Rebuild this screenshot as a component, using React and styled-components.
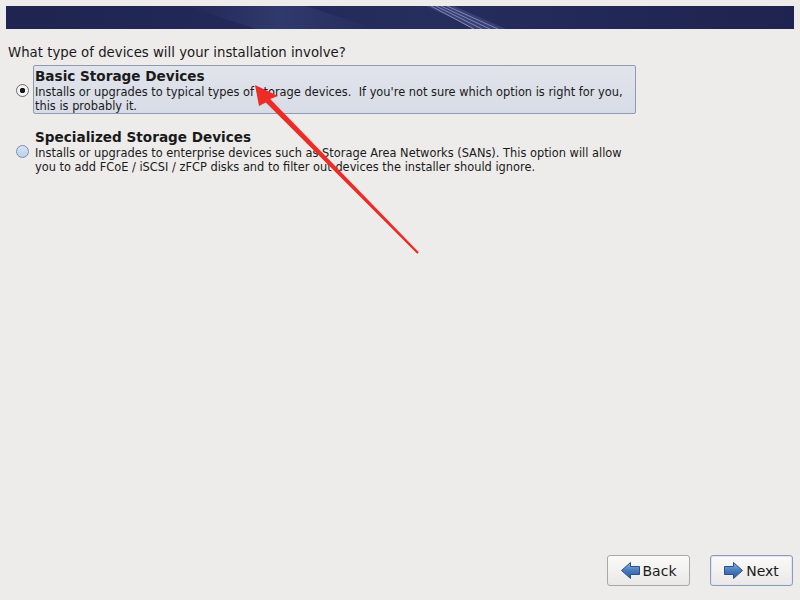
import React from "react";
import styled, { createGlobalStyle } from "styled-components";

const Global = createGlobalStyle`
  html, body { margin: 0; padding: 0; }
  body {
    background: #edeceb;
    font-family: "DejaVu Sans", "Liberation Sans", sans-serif;
    color: #1a1a1a;
  }
`;

const Page = styled.div`
  position: relative;
  height: 600px;
  width: 800px;
  display: flex;
  flex-direction: column;
  box-sizing: border-box;
  padding: 6px 7px 14px 6px;
  overflow: hidden;
`;

const Banner = styled.div`
  position: relative;
  height: 23px;
  margin-right: -1px;
  background: linear-gradient(90deg, #1f2450 0%, #232a5a 35%, #262e5e 55%, #222857 75%, #1f234f 100%);
  overflow: hidden;
`;

const Streak = styled.svg`
  position: absolute;
  left: 0;
  top: 0;
`;

const Question = styled.div`
  margin: 16px 0 0 2px;
  font-size: 13.3px;
  line-height: 16px;
`;

const Options = styled.div`
  display: flex;
  flex-direction: column;
  gap: 12px;
  margin-top: 4px;
`;

const OptionRow = styled.label`
  display: flex;
  align-items: center;
`;

const RadioCol = styled.div`
  width: 27px;
  display: flex;
  justify-content: flex-end;
  padding-right: 4px;
  box-sizing: border-box;
`;

const Radio = styled.span`
  width: 11px;
  height: 11px;
  border-radius: 50%;
  border: 1px solid ${(p) => (p.checked ? "#6b6b6b" : "#7f8ea8")};
  background: ${(p) =>
    p.checked
      ? "radial-gradient(circle, #1a1a1a 0 2.5px, #f4f4f4 3px)"
      : "linear-gradient(#d6e4f7, #bcd0ee)"};
  display: block;
  margin-top: 1px;
`;

const OptionBox = styled.div`
  width: 603px;
  box-sizing: border-box;
  padding: 1px 1px 0 1px;
  border: 1px solid ${(p) => (p.selected ? "#8f9ab3" : "transparent")};
  border-radius: 2px;
  background: ${(p) => (p.selected ? "linear-gradient(#e1e4eb, #d8dce6)" : "transparent")};
`;

const OptionTitle = styled.div`
  font-weight: bold;
  font-size: 13.6px;
  line-height: 18px;
`;

const OptionDesc = styled.div`
  font-size: 11.4px;
  line-height: 14px;
`;

const Spacer = styled.div`
  flex: 1;
`;

const Footer = styled.div`
  display: flex;
  justify-content: flex-end;
  gap: 20px;
`;

const Button = styled.button`
  width: 83px;
  height: 31px;
  display: flex;
  align-items: center;
  justify-content: center;
  gap: 2px;
  padding: 0 1px 0 0;
  border: 1px solid ${(p) => (p.focused ? "#8d9cb6" : "#a8a8a6")};
  border-radius: 3px;
  background: linear-gradient(#fafaf9, #e9e8e6);
  font-family: "DejaVu Sans", sans-serif;
  font-size: 14px;
  color: #1a1a1a;
  box-shadow: ${(p) => (p.focused ? "inset 0 0 0 1px #dfe6f0" : "none")};
`;

const Annotation = styled.svg`
  position: absolute;
  left: 0;
  top: 0;
  pointer-events: none;
`;

function BlueArrow({ dir }) {
  const flip = dir === "left" ? "translate(21,0) scale(-1,1)" : undefined;
  return (
    <svg width="21" height="19" viewBox="0 0 21 19">
      <defs>
        <linearGradient id={`g-${dir}`} x1="0" y1="0" x2="0" y2="1">
          <stop offset="0" stopColor="#8fb3de" />
          <stop offset="0.5" stopColor="#4a7bbd" />
          <stop offset="1" stopColor="#2c5a9a" />
        </linearGradient>
      </defs>
      <g transform={flip}>
        <path
          d="M1.5 5.5 H10.5 V1.5 L19.5 9.5 L10.5 17.5 V13.5 H1.5 Z"
          fill={`url(#g-${dir})`}
          stroke="#27508c"
          strokeWidth="1"
          strokeLinejoin="round"
        />
      </g>
    </svg>
  );
}

export default function App() {
  return (
    <>
      <Global />
      <Page>
        <Banner>
          <Streak width="789" height="23" viewBox="0 0 789 23">
            <defs>
              <linearGradient id="glow" x1="0" y1="0" x2="1" y2="0">
                <stop offset="0" stopColor="#3a4478" stopOpacity="0" />
                <stop offset="0.5" stopColor="#3a4478" stopOpacity="0.6" />
                <stop offset="1" stopColor="#3a4478" stopOpacity="0" />
              </linearGradient>
            </defs>
            <polygon points="180,0 300,0 370,23 250,23" fill="url(#glow)" />
            <g stroke="#b9bde0" strokeWidth="1" opacity="0.75">
              <line x1="425" y1="0" x2="468" y2="23" />
              <line x1="430" y1="0" x2="476" y2="23" />
              <line x1="435" y1="0" x2="484" y2="23" />
              <line x1="441" y1="0" x2="492" y2="23" />
            </g>
            <polygon points="420,0 448,0 500,23 470,23" fill="#5c64a0" opacity="0.35" />
          </Streak>
        </Banner>
        <Question>What type of devices will your installation involve?</Question>
        <Options>
          <OptionRow>
            <RadioCol>
              <Radio checked />
            </RadioCol>
            <OptionBox selected>
              <OptionTitle>Basic Storage Devices</OptionTitle>
              <OptionDesc>
                Installs or upgrades to typical types of storage devices.&nbsp; If you're not sure which option is right for you,
                <br />
                this is probably it.
              </OptionDesc>
            </OptionBox>
          </OptionRow>
          <OptionRow>
            <RadioCol>
              <Radio />
            </RadioCol>
            <OptionBox>
              <OptionTitle>Specialized Storage Devices</OptionTitle>
              <OptionDesc>
                Installs or upgrades to enterprise devices such as Storage Area Networks (SANs). This option will allow
                <br />
                you to add FCoE / iSCSI / zFCP disks and to filter out devices the installer should ignore.
              </OptionDesc>
            </OptionBox>
          </OptionRow>
        </Options>
        <Spacer />
        <Footer>
          <Button>
            <BlueArrow dir="left" />
            Back
          </Button>
          <Button focused>
            <BlueArrow dir="right" />
            Next
          </Button>
        </Footer>
        <Annotation width="800" height="600" viewBox="0 0 800 600">
          <polygon
            points="255,85 278,96 270.2,99 418.8,252.2 417.2,253.8 265.8,102.6 259,106"
            fill="#ee2b25"
          />
        </Annotation>
      </Page>
    </>
  );
}
